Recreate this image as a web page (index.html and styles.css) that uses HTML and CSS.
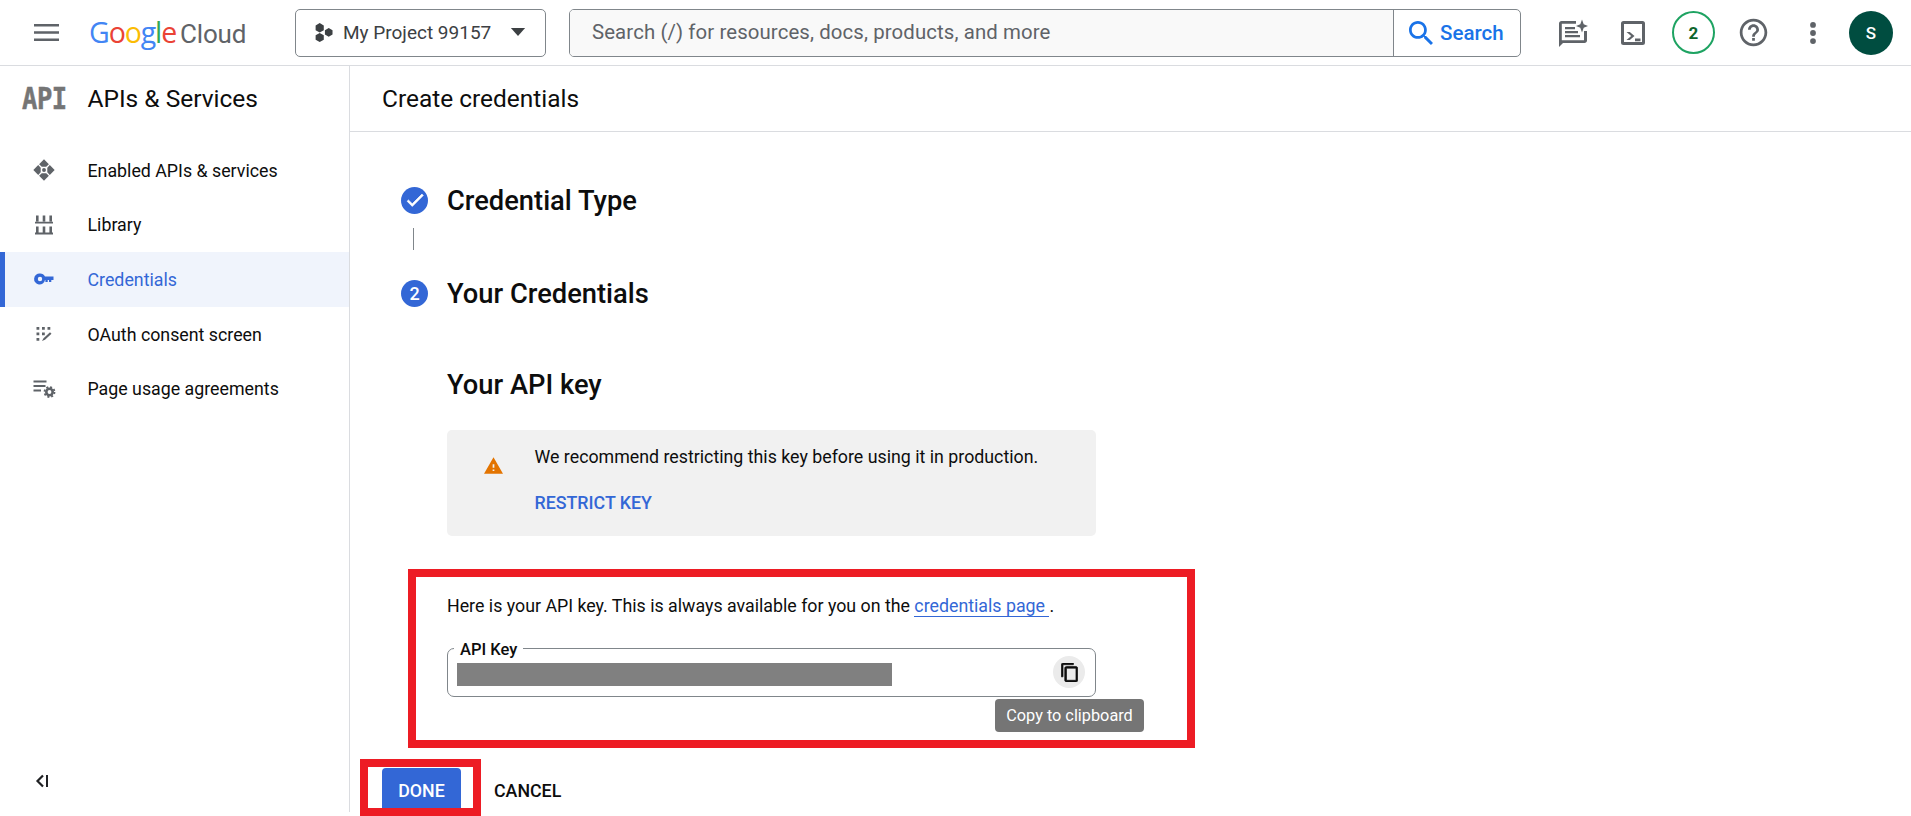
FILE: index.html
```html
<!DOCTYPE html>
<html lang="en">
<head>
<meta charset="utf-8">
<title>Create credentials</title>
<link rel="stylesheet" href="styles.css">
</head>
<body>
<div class="app">
  <header class="topbar">
    <svg class="menu-icon" viewBox="0 0 25 17"><path d="M0 0h25v2.400H0zM0 7.300h25v2.400H0zM0 14.600h25V17H0z"/></svg>
    <div class="logo"><span class="g-b">G</span><span class="g-r">o</span><span class="g-y">o</span><span class="g-b">g</span><span class="g-g">l</span><span class="g-r">e</span><span class="logo-cloud">Cloud</span></div>
    <button class="project">
      <svg class="project-dots" viewBox="0 0 20 20"><path d="M6 0l4.300 2.500v5L6 10 1.700 7.500v-5zM15.500 5.200l4 2.300v4.600l-4 2.300-4-2.300V7.500zM6 10.500l4.300 2.500v4.500L6 20l-4.300-2.500V13z"/></svg>
      <span class="project-name">My Project 99157</span>
      <svg class="project-caret" viewBox="0 0 16 9"><path d="M0 0h16L8 9z"/></svg>
    </button>
    <div class="search">
      <div class="search-input">Search (/) for resources, docs, products, and more</div>
      <div class="search-btn">
        <svg class="search-icon" viewBox="3 3 17.500 17.500"><path d="M15.500 14h-.79l-.28-.27C15.410 12.590 16 11.110 16 9.500 16 5.910 13.090 3 9.500 3S3 5.910 3 9.500 5.910 16 9.500 16c1.610 0 3.090-.59 4.230-1.570l.27.28v.79l5 4.990L20.490 19l-4.990-5zm-6 0C7.010 14 5 11.990 5 9.500S7.010 5 9.500 5 14 7.010 14 9.500 11.990 14 9.500 14z"/></svg>
        <span>Search</span>
      </div>
    </div>
    <div class="tools">
      <svg class="tool" viewBox="-1 -1 30 30"><path d="M0 28V4.500C0 3.100 1.100 2 2.500 2H17v2.700H2.800V21.300H25V12h3v9.500c0 1.400-1.100 2.500-2.500 2.500H4z"/><path d="M6 8h10v2.200H6zM6 12h13v2.200H6zM6 16h15v2.200H6z"/><path d="M23 .5l1.700 4.800L29 7l-4.300 1.700L23 13.500l-1.700-4.800L17 7l4.300-1.700z"/></svg>
      <svg class="tool" viewBox="-1 -1 30 30"><path fill-rule="evenodd" d="M4.500 2h19A2.500 2.500 0 0 1 26 4.500v19a2.500 2.500 0 0 1-2.500 2.500h-19A2.500 2.500 0 0 1 2 23.500v-19A2.500 2.500 0 0 1 4.500 2zM5 5v18h18V5z"/><path d="M7.500 13h3.300l4.700 4-4.700 4H7.500l4.700-4zM16 19.500h5.500v2.700H16z"/></svg>
      <div class="badge">2</div>
      <svg class="tool tool-help" viewBox="0 0 24 24"><path d="M11 18h2v-2h-2v2zm1-16C6.480 2 2 6.480 2 12s4.480 10 10 10 10-4.480 10-10S17.520 2 12 2zm0 18c-4.410 0-8-3.590-8-8s3.590-8 8-8 8 3.590 8 8-3.590 8-8 8zm0-14c-2.210 0-4 1.790-4 4h2c0-1.100.9-2 2-2s2 .9 2 2c0 2-3 1.750-3 5h2c0-2.250 3-2.500 3-5 0-2.210-1.790-4-4-4z"/></svg>
      <svg class="tool" viewBox="0 0 28 28"><circle cx="14" cy="6.500" r="2.700"/><circle cx="14" cy="14" r="2.700"/><circle cx="14" cy="21.500" r="2.700"/></svg>
      <div class="avatar">S</div>
    </div>
  </header>

  <div class="body">
    <aside class="sidebar">
      <div class="side-head"><span class="api-mark">API</span><span class="side-title">APIs &amp; Services</span></div>
      <nav class="nav">
        <a class="nav-item">
          <svg class="nav-icon" viewBox="-1.500 -1.500 27 27"><path fill-rule="evenodd" d="M12 0l5.500 5.500-3 2.800h-5l-3-2.800zM12 24l-5.500-5.500 3-2.800h5l3 2.800zM0 12l5.500-5.500 2.800 3v5l-2.800 3zM24 12l-5.500 5.500-2.800-3v-5l2.800-3z"/><circle cx="12" cy="12" r="2.200"/></svg>
          <span>Enabled APIs &amp; services</span>
        </a>
        <a class="nav-item">
          <svg class="nav-icon" viewBox="-3 -2.500 24 24"><path d="M1 0h2.600v6H1zM7.700 0h2.600v6H7.700zM14.400 0H17v6h-2.600zM0 6.200h18v1.800H0zM1 11h2.600v6H1zM7.700 11h2.600v6H7.700zM14.400 11H17v6h-2.600zM0 17h18v2H0z"/></svg>
          <span>Library</span>
        </a>
        <a class="nav-item nav-active">
          <svg class="nav-icon" viewBox="-2.500 -6.500 24 24"><path fill-rule="evenodd" d="M5.500 0a5.500 5.500 0 0 1 5 3h8.500v3.500h-2.200v2h-2.300v-2h-1.300v2h-2.300v-2h-.4a5.500 5.500 0 1 1-5-6.500zM5.500 3.300a2.200 2.200 0 1 0 0 4.400 2.200 2.200 0 1 0 0-4.400z"/></svg>
          <span>Credentials</span>
        </a>
        <a class="nav-item">
          <svg class="nav-icon" viewBox="-4.500 -5 24 24"><path d="M0 0h2.800v2.800H0zM5.500 0h2.800v2.800H5.500zM11 0h2.800v2.800H11zM0 5.500h2.800v2.800H0zM5.500 5.500h2.800v2.800H5.500zM0 11h2.800v2.800H0zM5.500 14l1.500-2.800 6.500-6 1.500 1.600-6.500 6z"/></svg>
          <span>OAuth consent screen</span>
        </a>
        <a class="nav-item">
          <svg class="nav-icon" viewBox="-1.500 -2.500 24 24"><path d="M0 1h13v1.900H0zM0 5.500h12v1.900H0zM0 10h7.500v1.900H0z"/><circle class="gear-ring" cx="16" cy="12.500" r="3.200"/><circle class="gear-teeth" cx="16" cy="12.500" r="5"/></svg>
          <span>Page usage agreements</span>
        </a>
      </nav>
      <svg class="collapse" viewBox="0 0 14 14"><path d="M8 1.500L2.500 7 8 12.500" fill="none" stroke-width="2.200"/><path d="M12 1v12" fill="none" stroke-width="2"/></svg>
    </aside>

    <main class="main">
      <div class="title-bar">Create credentials</div>
      <div class="step step-first">
        <span class="step-dot"><svg class="check" viewBox="0 0 24 24"><path d="M9 16.170L4.830 12l-1.420 1.410L9 19 21 7l-1.410-1.410z"/></svg></span>
        <span class="step-label">Credential Type</span>
      </div>
      <div class="step-line"></div>
      <div class="step step-second">
        <span class="step-dot">2</span>
        <span class="step-label">Your Credentials</span>
      </div>

      <div class="panel">
        <h2 class="key-heading">Your API key</h2>
        <div class="notice">
          <svg class="warn" viewBox="1 2 22 19"><path d="M1 21h22L12 2 1 21zm12-3h-2v-2h2v2zm0-4h-2v-4h2v4z"/></svg>
          <div class="notice-body">
            <p class="notice-text">We recommend restricting this key before using it in production.</p>
            <a class="restrict">RESTRICT KEY</a>
          </div>
        </div>
        <p class="intro">Here is your API key. This is always available for you on the <a class="link">credentials page </a>.</p>
        <div class="field">
          <span class="legend">API Key</span>
          <div class="key-mask"></div>
          <span class="copy-btn"><svg class="copy-icon" viewBox="2 1 19 22"><path d="M16 1H4c-1.100 0-2 .9-2 2v14h2V3h12V1zm3 4H8c-1.100 0-2 .9-2 2v14c0 1.100.9 2 2 2h11c1.100 0 2-.9 2-2V7c0-1.100-.9-2-2-2zm0 16H8V7h11v14z"/></svg></span>
          <span class="tooltip">Copy to clipboard</span>
        </div>
      </div>

      <div class="actions">
        <button class="done">DONE</button>
        <button class="cancel">CANCEL</button>
      </div>

      <div class="mark mark-key"></div>
      <div class="mark mark-done"></div>
    </main>
  </div>
</div>
</body>
</html>
```
FILE: styles.css
```css
* { box-sizing: border-box; }
html, body { margin: 0; height: 100%; }
body { font-family: Roboto, "Liberation Sans", sans-serif; color: #0d0d0d; background: #fff; overflow: hidden; }
.app { width: 1911px; height: 816px; display: flex; flex-direction: column; overflow: hidden; }

.topbar { height: 66px; flex: none; display: flex; align-items: center; border-bottom: 1px solid #dadce0; }
.menu-icon { width: 25px; height: 17px; margin-left: 34px; fill: #5f6368; flex: none; }
.logo { margin-left: 30px; width: 161px; flex: none; font-family: "Open Sans", sans-serif; font-size: 28.500px; letter-spacing: -1.100px; white-space: nowrap; line-height: 32px; }
.g-b { color: #4285f4; } .g-r { color: #ea4335; } .g-y { color: #fbbc04; } .g-g { color: #34a853; }
.logo-cloud { color: #5f6368; margin-left: 4px; font-family: Roboto, sans-serif; font-size: 26px; letter-spacing: -.2px; }
.project { margin-left: 45px; width: 251px; height: 48px; flex: none; display: flex; align-items: center; background: #fff; border: 1px solid #80868b; border-radius: 5px; padding: 0 0 1px 18px; font: 400 19px Roboto, sans-serif; color: #3c4043; }
.project-dots { width: 19px; height: 19px; fill: #3c4043; flex: none; }
.project-name { margin-left: 10px; white-space: nowrap; }
.project-caret { width: 16px; height: 8px; margin-left: 19px; fill: #3c4043; flex: none; }
.search { margin-left: 23px; width: 952px; height: 48px; flex: none; display: flex; border: 1px solid #80868b; border-radius: 5px; overflow: hidden; }
.search-input { width: 824px; background: #f9f9f9; padding-left: 22px; border-right: 1px solid #80868b; font-size: 20.400px; line-height: 45px; color: #5f6368; white-space: nowrap; letter-spacing: .1px; }
.search-btn { flex: 1; display: flex; align-items: center; padding-left: 15px; gap: 7px; color: #1a73e8; font-size: 20.500px; font-weight: 500; }
.search-icon { width: 24px; height: 24px; fill: #1a73e8; flex: none; }
.tools { display: flex; align-items: center; margin-left: 37px; }
.tool { width: 30px; height: 30px; fill: #5f6368; flex: none; margin-right: 30px; }
.tool-help { width: 33px; height: 33px; margin: 0 28.500px 0 -1.500px; }
.badge { width: 43px; height: 43px; margin: 0 23px 0 -6px; flex: none; border: 2.500px solid #1ea362; border-radius: 50%; display: flex; align-items: center; justify-content: center; color: #0d652d; font-size: 17px; font-weight: 700; }
.avatar { width: 44px; height: 44px; margin-left: -9px; flex: none; border-radius: 50%; background: #004d40; color: #fff; display: flex; align-items: center; justify-content: center; font-size: 17px; font-weight: 500; }

.body { flex: 1; display: flex; min-height: 0; }
.sidebar { width: 350px; flex: none; border-right: 1px solid #dadce0; display: flex; flex-direction: column; height: 746px; }
.side-head { height: 66px; flex: none; display: flex; align-items: center; padding-bottom: 1px; }
.api-mark { margin-left: 22px; width: 44px; font-family: "DejaVu Sans Mono", monospace; font-weight: 700; font-size: 30px; letter-spacing: -.5px; color: #757575; flex: none; transform: scaleX(.85); transform-origin: left center; -webkit-text-stroke: .5px #757575; }
.side-title { margin-left: 21.500px; font-size: 24.500px; white-space: nowrap; }
.nav { margin-top: 11px; display: flex; flex-direction: column; }
.nav-item { height: 54.600px; display: flex; align-items: center; padding-left: 31.500px; font-size: 17.800px; white-space: nowrap; }
.nav-icon { width: 24px; height: 24px; fill: #5f6368; flex: none; margin-right: 32px; }
.nav-active { background: #f0f4fc; color: #3367d6; box-shadow: inset 5px 0 0 #3367d6; }
.nav-active .nav-icon { fill: #3367d6; }
.gear-ring { fill: none; stroke: #5f6368; stroke-width: 2.600; }
.gear-teeth { fill: none; stroke: #5f6368; stroke-width: 1.800; stroke-dasharray: 2 1.930; }
.collapse { width: 14px; height: 14px; margin: auto 0 24px 35px; stroke: #202124; }

.main { flex: 1; position: relative; min-width: 0; }
.title-bar { height: 66px; border-bottom: 1px solid #dadce0; padding-left: 32px; font-size: 24.450px; line-height: 66px; }
.step { display: flex; align-items: center; height: 28px; margin-left: 51px; }
.step-first { margin-top: 54px; }
.step-second { margin-top: 29px; }
.step-dot { width: 27px; height: 27px; border-radius: 50%; background: #3367d6; color: #fff; flex: none; display: flex; align-items: center; justify-content: center; font-size: 18px; font-weight: 500; }
.check { width: 22px; height: 22px; fill: #fff; stroke: #fff; stroke-width: .8; }
.step-label { margin-left: 19px; padding-top: 2px; font-size: 27.300px; font-weight: 500; white-space: nowrap; }
.step-line { width: 1px; height: 22px; margin: 14px 0 0 63px; background: #80868b; }
.panel { margin: 61px 0 0 97px; width: 649px; }
.key-heading { margin: 0; font-size: 27.300px; font-weight: 500; line-height: 34px; height: 32px; }
.notice { margin-top: 30px; height: 106px; background: #f1f1f1; border-radius: 5px; display: flex; }
.warn { width: 19px; height: 17px; margin: 27px 32px 0 36.500px; fill: #e37400; flex: none; }
.notice-body { display: flex; flex-direction: column; padding-top: 15px; }
.notice-text { margin: 0; font-size: 17.800px; line-height: 24px; white-space: nowrap; }
.restrict { margin-top: 22px; font-size: 17.800px; font-weight: 500; line-height: 24px; color: #3367d6; }
.intro { margin: 58px 0 0; font-size: 17.800px; line-height: 24px; white-space: nowrap; }
.link { color: #3367d6; border-bottom: 1px solid #3367d6; white-space: pre; }
.field { position: relative; margin-top: 30px; height: 49px; border: 1px solid #80868b; border-radius: 7px; }
.legend { position: absolute; left: 6px; top: -9px; padding: 0 6px; background: #fff; font-size: 16.500px; font-weight: 500; line-height: 20px; }
.key-mask { position: absolute; left: 9px; top: 14px; width: 435px; height: 23px; background: #808080; }
.copy-btn { position: absolute; left: 605px; top: 7px; width: 32px; height: 32px; border-radius: 50%; background: #ebebeb; display: flex; align-items: center; justify-content: center; }
.copy-icon { width: 17px; height: 19px; fill: #0d0d0d; stroke: #0d0d0d; stroke-width: .8; }
.tooltip { position: absolute; left: 547px; top: 50px; width: 149px; height: 33px; background: #757575; border-radius: 4px; color: #fff; font-size: 16.300px; line-height: 34px; text-align: center; white-space: nowrap; }
.actions { margin: 71px 0 0 32px; display: flex; align-items: center; }
.done { width: 79px; height: 48px; border: 0; border-radius: 4px; background: #3367d6; color: #fff; font: 500 17.800px Roboto, sans-serif; padding: 0 0 4px; }
.cancel { margin-left: 33px; border: 0; background: none; padding: 0 0 4px; color: #0d0d0d; font: 500 17.800px Roboto, sans-serif; }
.mark { position: absolute; border: 8px solid #ed1c24; }
.mark-key { left: 58px; top: 503px; width: 787px; height: 179px; }
.mark-done { left: 10px; top: 693px; width: 121px; height: 57px; }
```
